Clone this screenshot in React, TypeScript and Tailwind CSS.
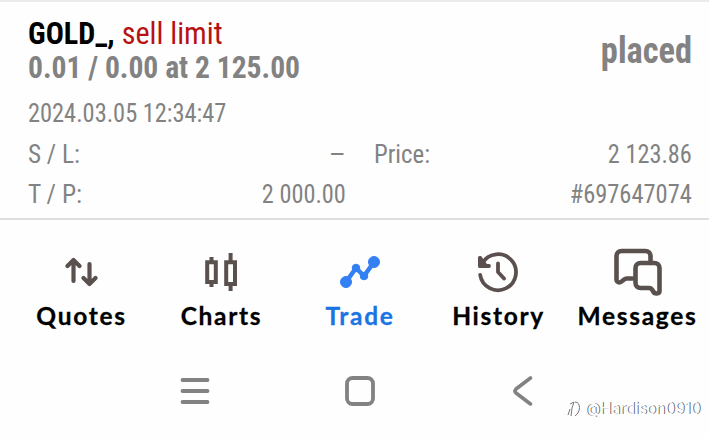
import type { ReactNode } from "react";

function Tab({ label, width, active, children }: { label: string; width: string; active?: boolean; children: ReactNode }) {
  return (
    <div className={`flex flex-col items-center ${width}`}>
      <div className="flex h-[50px] items-center">{children}</div>
      <span
        className={`mt-[2px] pl-px font-['Lato',sans-serif] text-[24.5px] leading-[34px] font-bold tracking-[1.7px] whitespace-nowrap [-webkit-text-stroke:0.3px_currentColor] ${active ? "text-[#1b74e4]" : "text-black"}`}
      >
        {label}
      </span>
    </div>
  );
}

export default function App() {
  return (
    <div className="h-[438px] w-[709px] overflow-hidden border-t-2 border-[#ebebeb] bg-[#fefefe] font-['Roboto_Condensed','Roboto',sans-serif] [font-stretch:75%]">
      <section className="flex h-[218px] flex-col border-b-2 border-[#dedede] pr-[17px] pl-7 text-[26px] leading-10 text-[#828282]">
        <div className="flex items-center justify-between pt-[15px]">
          <div className="text-[31px] leading-[34px] font-bold whitespace-nowrap">
            <div className="origin-left scale-x-[0.972] text-black">
              GOLD_, <span className="font-normal text-[#b71212]">sell limit</span>
            </div>
            <div className="origin-left scale-x-[0.954]">0.01 / 0.00 at 2 125.00</div>
          </div>
          <span className="origin-right scale-x-[0.93] text-[37px] leading-[34px] font-bold">placed</span>
        </div>
        <div className="mt-2 origin-left scale-x-[0.938]">2024.03.05 12:34:47</div>
        <div className="mt-px flex">
          <div className="flex w-[318px] justify-between">
            <span className="origin-left scale-x-[0.97]">S / L:</span>
            <span className="origin-right scale-x-[1.15]">–</span>
          </div>
          <div className="ml-7 flex flex-1 justify-between">
            <span className="origin-left scale-x-[0.955]">Price:</span>
            <span className="origin-right scale-x-[0.935]">2 123.86</span>
          </div>
        </div>
        <div className="flex">
          <div className="flex w-[318px] justify-between">
            <span className="origin-left scale-x-[0.98]">T / P:</span>
            <span className="origin-right scale-x-[0.935]">2 000.00</span>
          </div>
          <div className="flex flex-1 justify-end">
            <span className="origin-right scale-x-[0.94]">#697647074</span>
          </div>
        </div>
      </section>

      <nav className="flex pt-[27px] pl-[11px] text-[#5a504e] [font-stretch:normal]">
        <Tab label="Quotes" width="w-[140px]">
          <svg width="34" height="30" viewBox="0 0 34 30" fill="none" stroke="currentColor" strokeWidth="4.2" strokeLinecap="round" strokeLinejoin="round">
            <path d="M9.5 24V3M3.5 9l6-6 6 6M25.5 7v19M19.5 21l6 6 6-6" />
          </svg>
        </Tab>
        <Tab label="Charts" width="w-[140px]">
          <svg width="32" height="40" viewBox="0 0 32 40" fill="none" stroke="currentColor" strokeWidth="4">
            <path d="M2.2 10.2h8.6V30H2.2zM6.5 5v5M6.5 30v5M21.2 10.2H30V32h-8.8zM25.6 1v9M25.6 32v7" />
          </svg>
        </Tab>
        <Tab label="Trade" width="w-[137px]" active>
          <svg width="42" height="34" viewBox="0 0 42 34" fill="#3280f4" stroke="#3280f4">
            <path d="M7 27 17 13l8 8L35 7" fill="none" strokeWidth="4.5" />
            <circle cx="7" cy="27" r="5.5" /><circle cx="17" cy="13" r="3.8" />
            <circle cx="25" cy="21" r="3.8" /><circle cx="35" cy="7" r="5.5" />
          </svg>
        </Tab>
        <Tab label="History" width="w-[140px]">
          <svg width="42" height="42" viewBox="0 0 42 42" fill="none" stroke="currentColor" strokeWidth="3.8" strokeLinecap="round" strokeLinejoin="round">
            <path d="M5.5 12A18 18 0 1 1 3.2 24M3 7v8h9M21 12.5V21l6 6.500" />
            <path d="M3 7v8h6z" fill="currentColor" />
          </svg>
        </Tab>
        <Tab label="Messages" width="w-[138px]">
          <svg width="50" height="48" viewBox="0 0 50 48" fill="none" stroke="currentColor" strokeWidth="4.600" strokeLinecap="round" strokeLinejoin="round">
            <path d="M20.5 30.5h-6c-3 0-4.5 4-7 4-2 0-3-1.500-3-3V8a5 5 0 0 1 5-5h24a5 5 0 0 1 5 5v7" />
            <path d="M28.500 15h14a5 5 0 0 1 5 5v23c0 3-5 3.500-6.500 0-1-2-2-3-4-3h-8.500a5 5 0 0 1-5-5V20a5 5 0 0 1 5-5z" />
          </svg>
        </Tab>
      </nav>

      <footer className="flex h-[96px] items-start pt-[43px] pl-[180px] text-[#828282]">
        <svg width="30" height="30" viewBox="0 0 30 30" stroke="currentColor" strokeWidth="3.8" strokeLinecap="round">
          <path d="M2.500 4h25M2.500 15h25M2.500 26h25" />
        </svg>
        <svg className="ml-[135px]" width="30" height="30" viewBox="0 0 30 30" fill="none" stroke="currentColor" strokeWidth="3.8">
          <rect x="2" y="2" width="26" height="26" rx="5.500" />
        </svg>
        <svg className="ml-[137px]" width="22" height="30" viewBox="0 0 22 30" fill="none" stroke="currentColor" strokeWidth="3.600" strokeLinecap="round" strokeLinejoin="round">
          <path d="M18.500 2 4 13q-2 2 0 4l14.500 11" />
        </svg>
        <div className="mt-[21px] ml-[33px] flex items-center gap-[3px] whitespace-nowrap">
          <svg width="15" height="18" viewBox="0 0 15 18" fill="none" stroke="#777" strokeWidth="1">
            <path d="M1 15 3 9M3 4l4-2-2 6-1 8M8 2c6 0 6 10 0 14" />
          </svg>
          <span className="font-['Inter',sans-serif] text-[15.5px] leading-6 tracking-[-0.05px] text-white [text-shadow:1px_0_0_#666]">@Hardison0910</span>
        </div>
      </footer>
    </div>
  );
}
